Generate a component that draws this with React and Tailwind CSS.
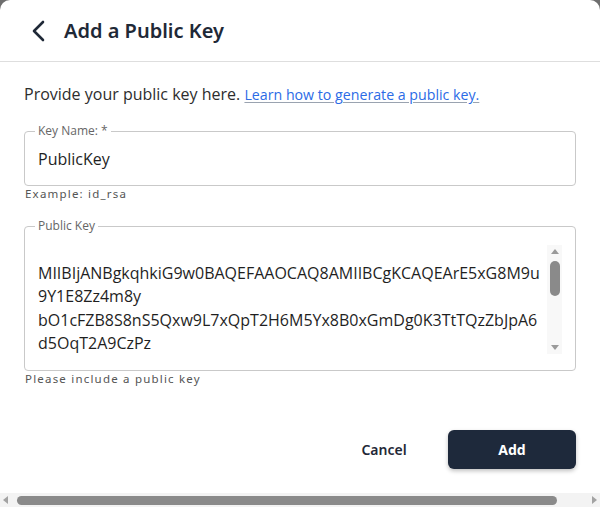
const keyText = `MIIBIjANBgkqhkiG9w0BAQEFAAOCAQ8AMIIBCgKCAQEArE5xG8M9u
9Y1E8Zz4m8y
bO1cFZB8S8nS5Qxw9L7xQpT2H6M5Yx8B0xGmDg0K3TtTQzZbJpA6
d5OqT2A9CzPz
Vq3R7mLk2NcX8aHf4PzT1bWs9YeQ0uJd6KxG3nVt5oRa8MiC2lBe
7FhUy4qZp1DgWs0NxE3cTj9LvK6bHr2aOm5YiQ8fXzS4tPuG7kJn
1wCe9VdA3sRy6LhM0qBo2ZxT8gNf4KpE5jUv7aIcW3mXlS9rDt1Q
IDAQAB`;

const Arrow = ({ dir }) => {
  const paths = {
    up: 'M0 5 L4 0 L8 5 Z',
    down: 'M0 0 L8 0 L4 5 Z',
  };
  return (
    <svg width="8" height="5" viewBox="0 0 8 5">
      <path d={paths[dir]} fill="#9a9a9a" />
    </svg>
  );
};

const SideArrow = ({ dir }) => (
  <svg width="5" height="8" viewBox="0 0 5 8">
    <path d={dir === 'left' ? 'M5 0 L0 4 L5 8 Z' : 'M0 0 L5 4 L0 8 Z'} fill="#a3a3a3" />
  </svg>
);

export default function App() {
  return (
    <div className="h-[507px] w-[600px] overflow-hidden bg-[#6e6e6e]">
      <div className="flex h-full w-full flex-col rounded-t-[10px] bg-white font-['Open_Sans',sans-serif]">
        <div className="flex h-[62px] shrink-0 items-center border-b border-[#dedede] pl-[31px]">
          <svg width="14" height="22" viewBox="0 0 14 22" fill="none" className="text-[#1f2937]">
            <path d="M12 2 L3 11 L12 20" stroke="currentColor" strokeWidth="2.6" strokeLinecap="round" strokeLinejoin="round" />
          </svg>
          <h1 className="ml-[19px] font-['Noto_Sans',sans-serif] text-[20px] font-semibold text-[#1f2937]">Add a Public Key</h1>
        </div>

        <div className="px-6 pt-[20px]">
          <p className="text-[16px] leading-6 text-[#2d2d2d]">
            Provide your public key here.{' '}
            <a href="#" className="text-[14.2px] text-[#2b6be6] underline decoration-[#9aa3b0] underline-offset-2">
              Learn how to generate a public key.
            </a>
          </p>

          <fieldset className="mt-4 rounded-[4px] border border-[#c9c9c9] pl-[13px] pr-[13px]">
            <legend className="ml-[-3px] px-[3px] text-[12px] leading-4 text-[#666]">Key Name: *</legend>
            <div className="pt-[8px] pb-[14px] text-[16px] leading-6 text-[#1f1f1f]">PublicKey</div>
          </fieldset>
          <p className="pl-px font-['Noto_Sans',sans-serif] text-[11.5px] leading-4 tracking-[1.2px] text-[#555]">Example: id_rsa</p>

          <fieldset className="mt-[16px] rounded-[4px] border border-[#c9c9c9] pl-[13px] pr-[13px]">
            <legend className="ml-[-3px] px-[3px] text-[12px] leading-4 text-[#666]">Public Key</legend>
            <div className="mt-[11px] mb-[16px] flex h-[109px]">
              <textarea
                readOnly
                value={keyText}
                className="block h-full min-w-0 flex-1 resize-none overflow-hidden whitespace-pre pt-[17px] text-[16px] leading-[23.4px] text-[#1f1f1f] outline-none"
              />
              <div className="flex w-[15px] shrink-0 flex-col items-center bg-[#f8f8f8] py-[4px]">
                <Arrow dir="up" />
                <div className="mt-[7px] h-[35px] w-[10px] rounded-full bg-[#8a8a8a]" />
                <div className="flex-1" />
                <Arrow dir="down" />
              </div>
            </div>
          </fieldset>
          <p className="pl-px font-['Noto_Sans',sans-serif] text-[11.5px] leading-4 tracking-[1.2px] text-[#555]">Please include a public key</p>

          <div className="mt-[43px] flex justify-end gap-[14px] font-['Noto_Sans',sans-serif]">
            <button className="h-[39px] w-[100px] text-[14px] font-semibold text-[#1f2937]">Cancel</button>
            <button className="h-[39px] w-[128px] rounded-[6px] bg-[#1e293b] text-[14px] font-bold text-white shadow-[0_2px_4px_rgba(0,0,0,0.25)]">Add</button>
          </div>
        </div>

        <div className="mt-auto flex h-[14px] shrink-0 items-center bg-[#f3f3f3] px-[3px]">
          <SideArrow dir="left" />
          <div className="ml-[9px] h-[9px] w-[540px] rounded-full bg-[#8a8a8a]" />
          <div className="flex-1" />
          <SideArrow dir="right" />
        </div>
      </div>
    </div>
  );
}
